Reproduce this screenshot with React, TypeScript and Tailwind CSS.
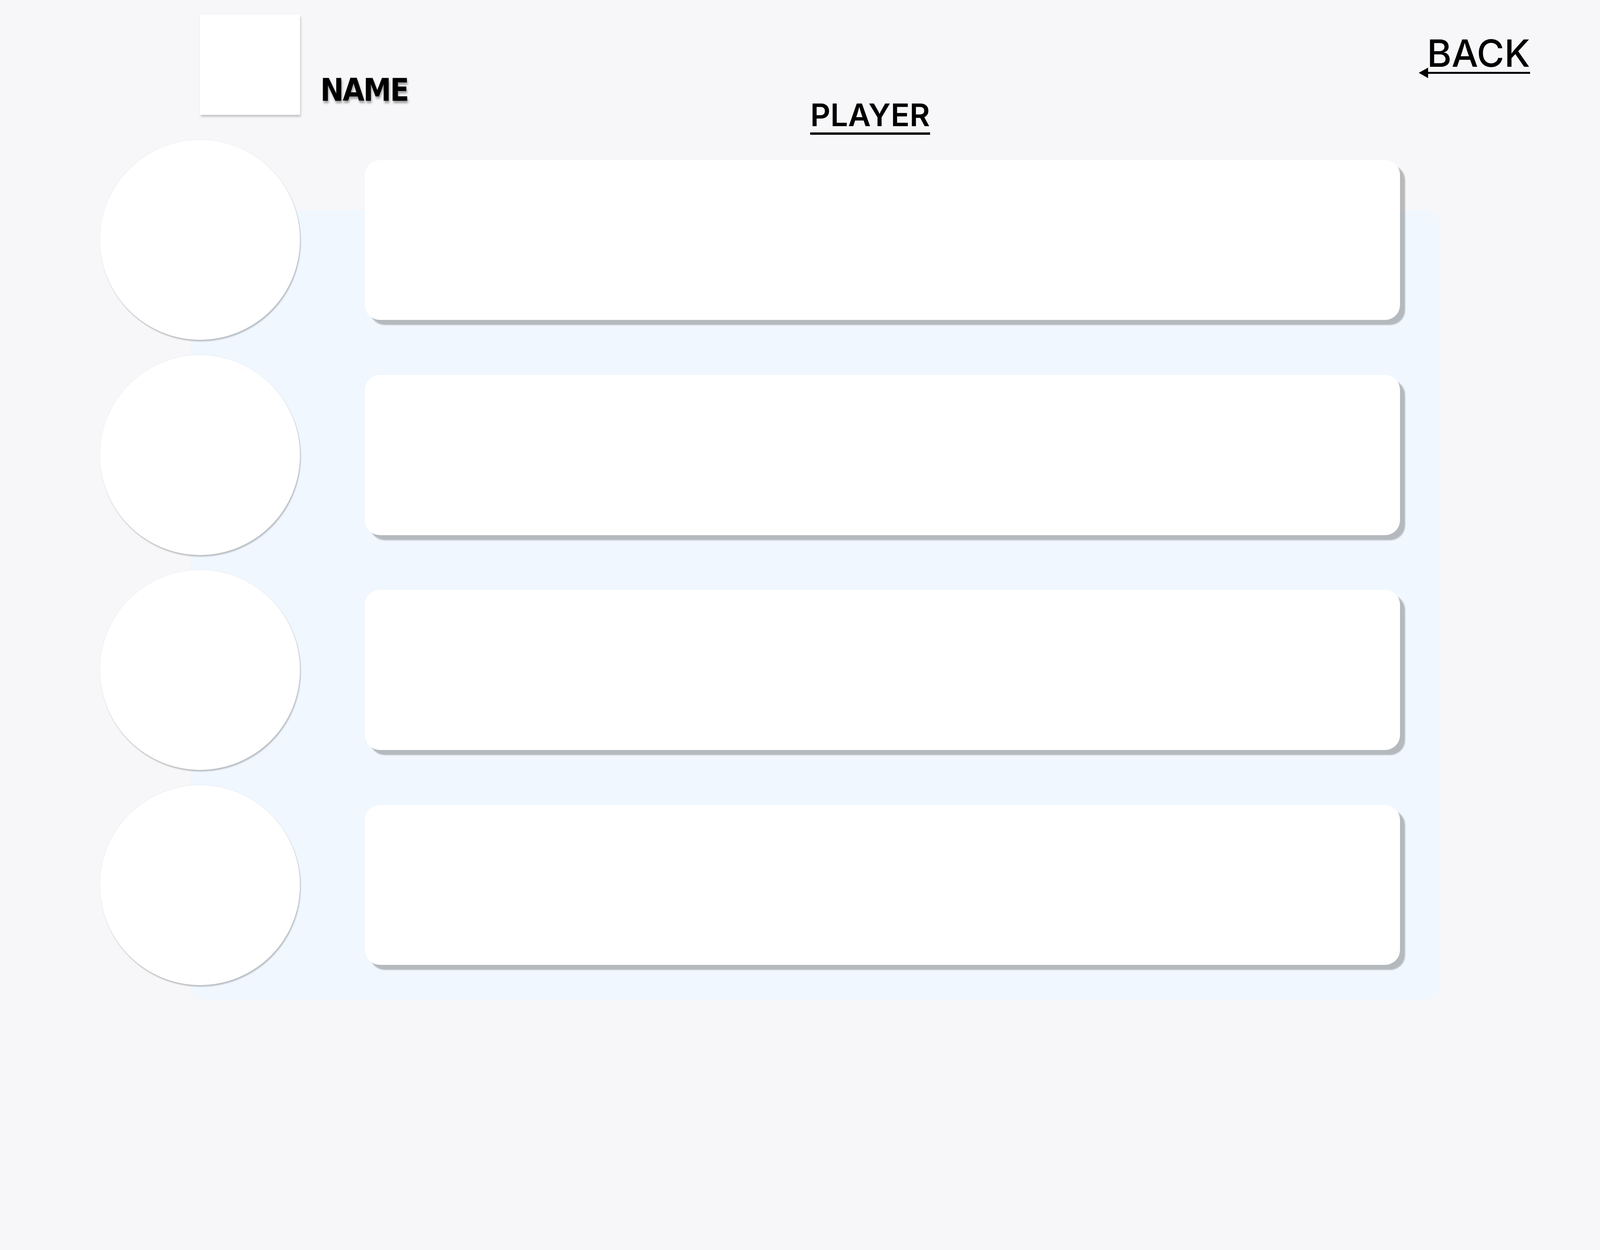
import React from 'react';

const rows = [0, 1, 2, 3];

const BackArrow: React.FC = () => (
  <svg width="285" height="27" viewBox="0 0 285 27" className="-mt-[11px] block">
    <polygon points="0,13.5 24,0 24,27" fill="#000" />
    <rect x="24" y="11" width="261" height="5" fill="#000" />
  </svg>
);

const App: React.FC = () => {
  return (
    <div className="min-h-screen w-full bg-[#f7f7f9] font-['Inter','Noto_Sans',sans-serif] text-black">
      <div className="relative h-[2560px] w-full overflow-hidden">
        {/* list backdrop */}
        <div className="absolute left-[488px] top-[538px] h-[2022px] w-[3198px] rounded-[38px] bg-[#f0f7fe]"></div>

        <div className="relative z-10 flex flex-col">
          {/* Header */}
          <div className="flex h-[339.2px] items-start pl-[512px]">
            <div className="mt-[38.4px] h-[256px] w-[256px] shrink-0 bg-white shadow-[2px_5px_5px_rgba(0,0,0,0.2)]"></div>

            <div className="ml-[52px] mt-[190.7px] w-[400px] shrink-0 font-['DejaVu_Sans_Condensed','DejaVu_Sans',sans-serif] text-[80px] font-bold leading-none tracking-[-3px] font-stretch-condensed [text-shadow:2px_6px_5px_rgba(0,0,0,0.35)]">
              NAME
            </div>

            <div className="mt-[254px] flex w-[2015px] shrink-0 justify-center">
              <span className="inline-block border-b-[6px] border-black pb-[5px] text-[80px] font-semibold leading-none">
                PLAYER
              </span>
            </div>

            <div className="ml-auto mr-[179px] mt-[88px] flex flex-col items-end">
              <span className="text-[96px] font-medium leading-none">BACK</span>
              <BackArrow />
            </div>
          </div>

          {/* Player rows */}
          <div className="flex flex-col">
            {rows.map((i) => (
              <div key={i} className="flex h-[550.4px] items-center pl-[256px]">
                <div className="h-[512px] w-[512px] shrink-0 rounded-full bg-white shadow-[2px_4px_3px_rgba(0,0,0,0.22),0_0_2px_rgba(0,0,0,0.12)]"></div>
                <div className="ml-[166.4px] h-[409.6px] w-[2649.6px] shrink-0 rounded-[38px] bg-white shadow-[13px_13px_3px_rgba(0,0,0,0.25)]"></div>
              </div>
            ))}
          </div>
        </div>
      </div>
    </div>
  );
};

export default App;
